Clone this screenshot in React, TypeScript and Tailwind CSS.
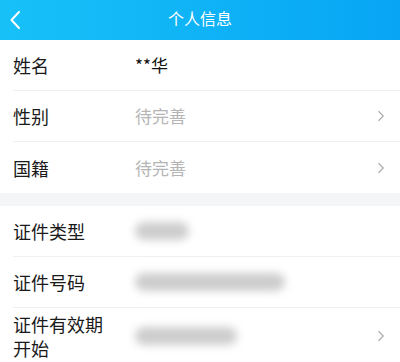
import { ChevronRight } from 'lucide-react';

const font = { fontFamily: '"Noto Sans CJK SC", "Noto Sans", sans-serif' };

const Row = ({ label, children, arrow, last }: { label: React.ReactNode; children?: React.ReactNode; arrow?: boolean; last?: boolean }) => (
  <div className="pl-[13px]">
    <div className={`flex items-center h-[51px] pr-[10px] ${last ? '' : 'border-b border-[#efefef]'}`}>
      <div className="w-[122px] text-[18px] leading-[22px] text-[#1a1a1a]">{label}</div>
      <div className="flex-1 flex items-center">{children}</div>
      {arrow && <ChevronRight className="w-[18px] h-[18px] text-[#ababab]" strokeWidth={1.5} />}
    </div>
  </div>
);

const Blur = ({ w }: { w: string }) => (
  <div className={`${w} h-[18px] rounded-full bg-[#cdcdcd] blur-[4px]`} />
);

export default function App() {
  return (
    <div className="w-[400px] h-[362px] bg-white overflow-hidden" style={font}>
      <div className="h-[40px] bg-gradient-to-r from-[#17c1f8] to-[#08a5f4] relative flex items-center justify-center">
        <svg className="absolute left-[9px] top-[10px]" width="12" height="20" viewBox="0 0 12 20" fill="none">
          <path d="M10 2 L2.5 10 L10 18" stroke="white" strokeWidth="2" strokeLinecap="round" strokeLinejoin="round" />
        </svg>
        <span className="text-white text-[16px] leading-none -mt-[5px]">个人信息</span>
      </div>

      <Row label="姓名">
        <span className="text-[17px] text-[#111]">**华</span>
      </Row>
      <Row label="性别" arrow>
        <span className="text-[17px] text-[#b5b5b5]">待完善</span>
      </Row>
      <Row label="国籍" arrow last>
        <span className="text-[17px] text-[#b5b5b5]">待完善</span>
      </Row>

      <div className="h-[13px] bg-[#f3f5f7]" />

      <Row label="证件类型">
        <Blur w="w-[54px]" />
      </Row>
      <Row label="证件号码">
        <Blur w="w-[150px]" />
      </Row>
      <div className="pl-[13px]">
        <div className="flex items-center h-[56px] pr-[10px]">
          <div className="w-[122px] text-[18px] leading-[24px] text-[#1a1a1a]">证件有效期<br />开始</div>
          <div className="flex-1 flex items-center"><Blur w="w-[102px]" /></div>
          <ChevronRight className="w-[18px] h-[18px] text-[#ababab]" strokeWidth={1.5} />
        </div>
      </div>
    </div>
  );
}
